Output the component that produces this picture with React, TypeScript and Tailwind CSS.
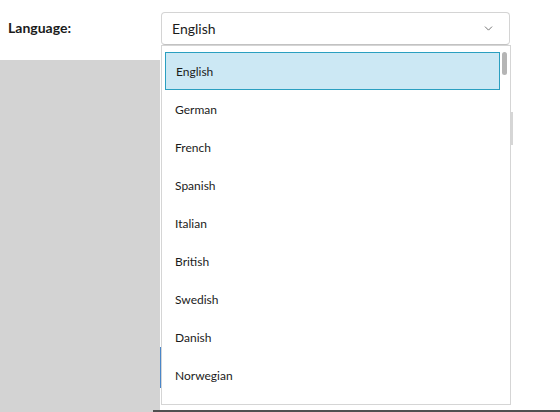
import { ChevronDown } from "lucide-react"

const languages = ["English", "German", "French", "Spanish", "Italian", "British", "Swedish", "Danish", "Norwegian"]

export default function App() {
  const selected = "English"

  return (
    <div className="relative w-[560px] h-[412px] overflow-hidden bg-white font-['Lato','Noto_Sans',sans-serif] text-[#1b1b1b]">
      {/* header row */}
      <div className="flex h-[60px] items-start">
        <label className="w-[161px] pl-2 pt-[17px] text-[14px] font-bold">Language:</label>
        <button className="mt-3 flex h-[33px] w-[349px] items-center justify-between rounded-[4px] border border-[#d4d4d4] border-b-[#c2c2c2] bg-white pl-[10px] pr-[14px] text-left text-[14px]">
          <span>{selected}</span>
          <ChevronDown className="h-[13px] w-[13px] text-[#606060]" strokeWidth={1.6} />
        </button>
      </div>

      {/* content underneath */}
      <div className="flex h-[350px]">
        <div className="w-[160px] bg-[#d3d3d3]" />
        <div className="relative flex-1 bg-white">
          <div className="absolute left-0 top-[287px] h-[41px] w-px bg-[#4a86c8]" />
          <div className="absolute left-[351px] top-[52px] h-[33px] w-[2px] bg-[#d6d6d6]" />
        </div>
      </div>
      <div className="flex h-[2px]">
        <div className="w-[153px] bg-[#d3d3d3]" />
        <div className="flex-1 bg-[#505050]" />
      </div>

      {/* open dropdown */}
      <div className="absolute left-[161px] top-[45px] flex h-[360px] w-[350px] border border-[#d5d5d5] bg-white pt-[6px] pl-[3px]">
        <ul className="flex-1">
          {languages.map((lang) => (
            <li
              key={lang}
              className={`flex h-[38px] items-center pl-[10px] pt-[2px] text-[12px] ${
                lang === selected ? "border border-[#2a9fc0] bg-[#cce8f4] pl-[9px]" : ""
              }`}
            >
              {lang}
            </li>
          ))}
        </ul>
        <div className="w-[10px] pl-[2px] pr-[3px]">
          <div className="h-[23px] w-[5px] rounded-full bg-[#b5b5b5]" />
        </div>
      </div>
    </div>
  )
}
